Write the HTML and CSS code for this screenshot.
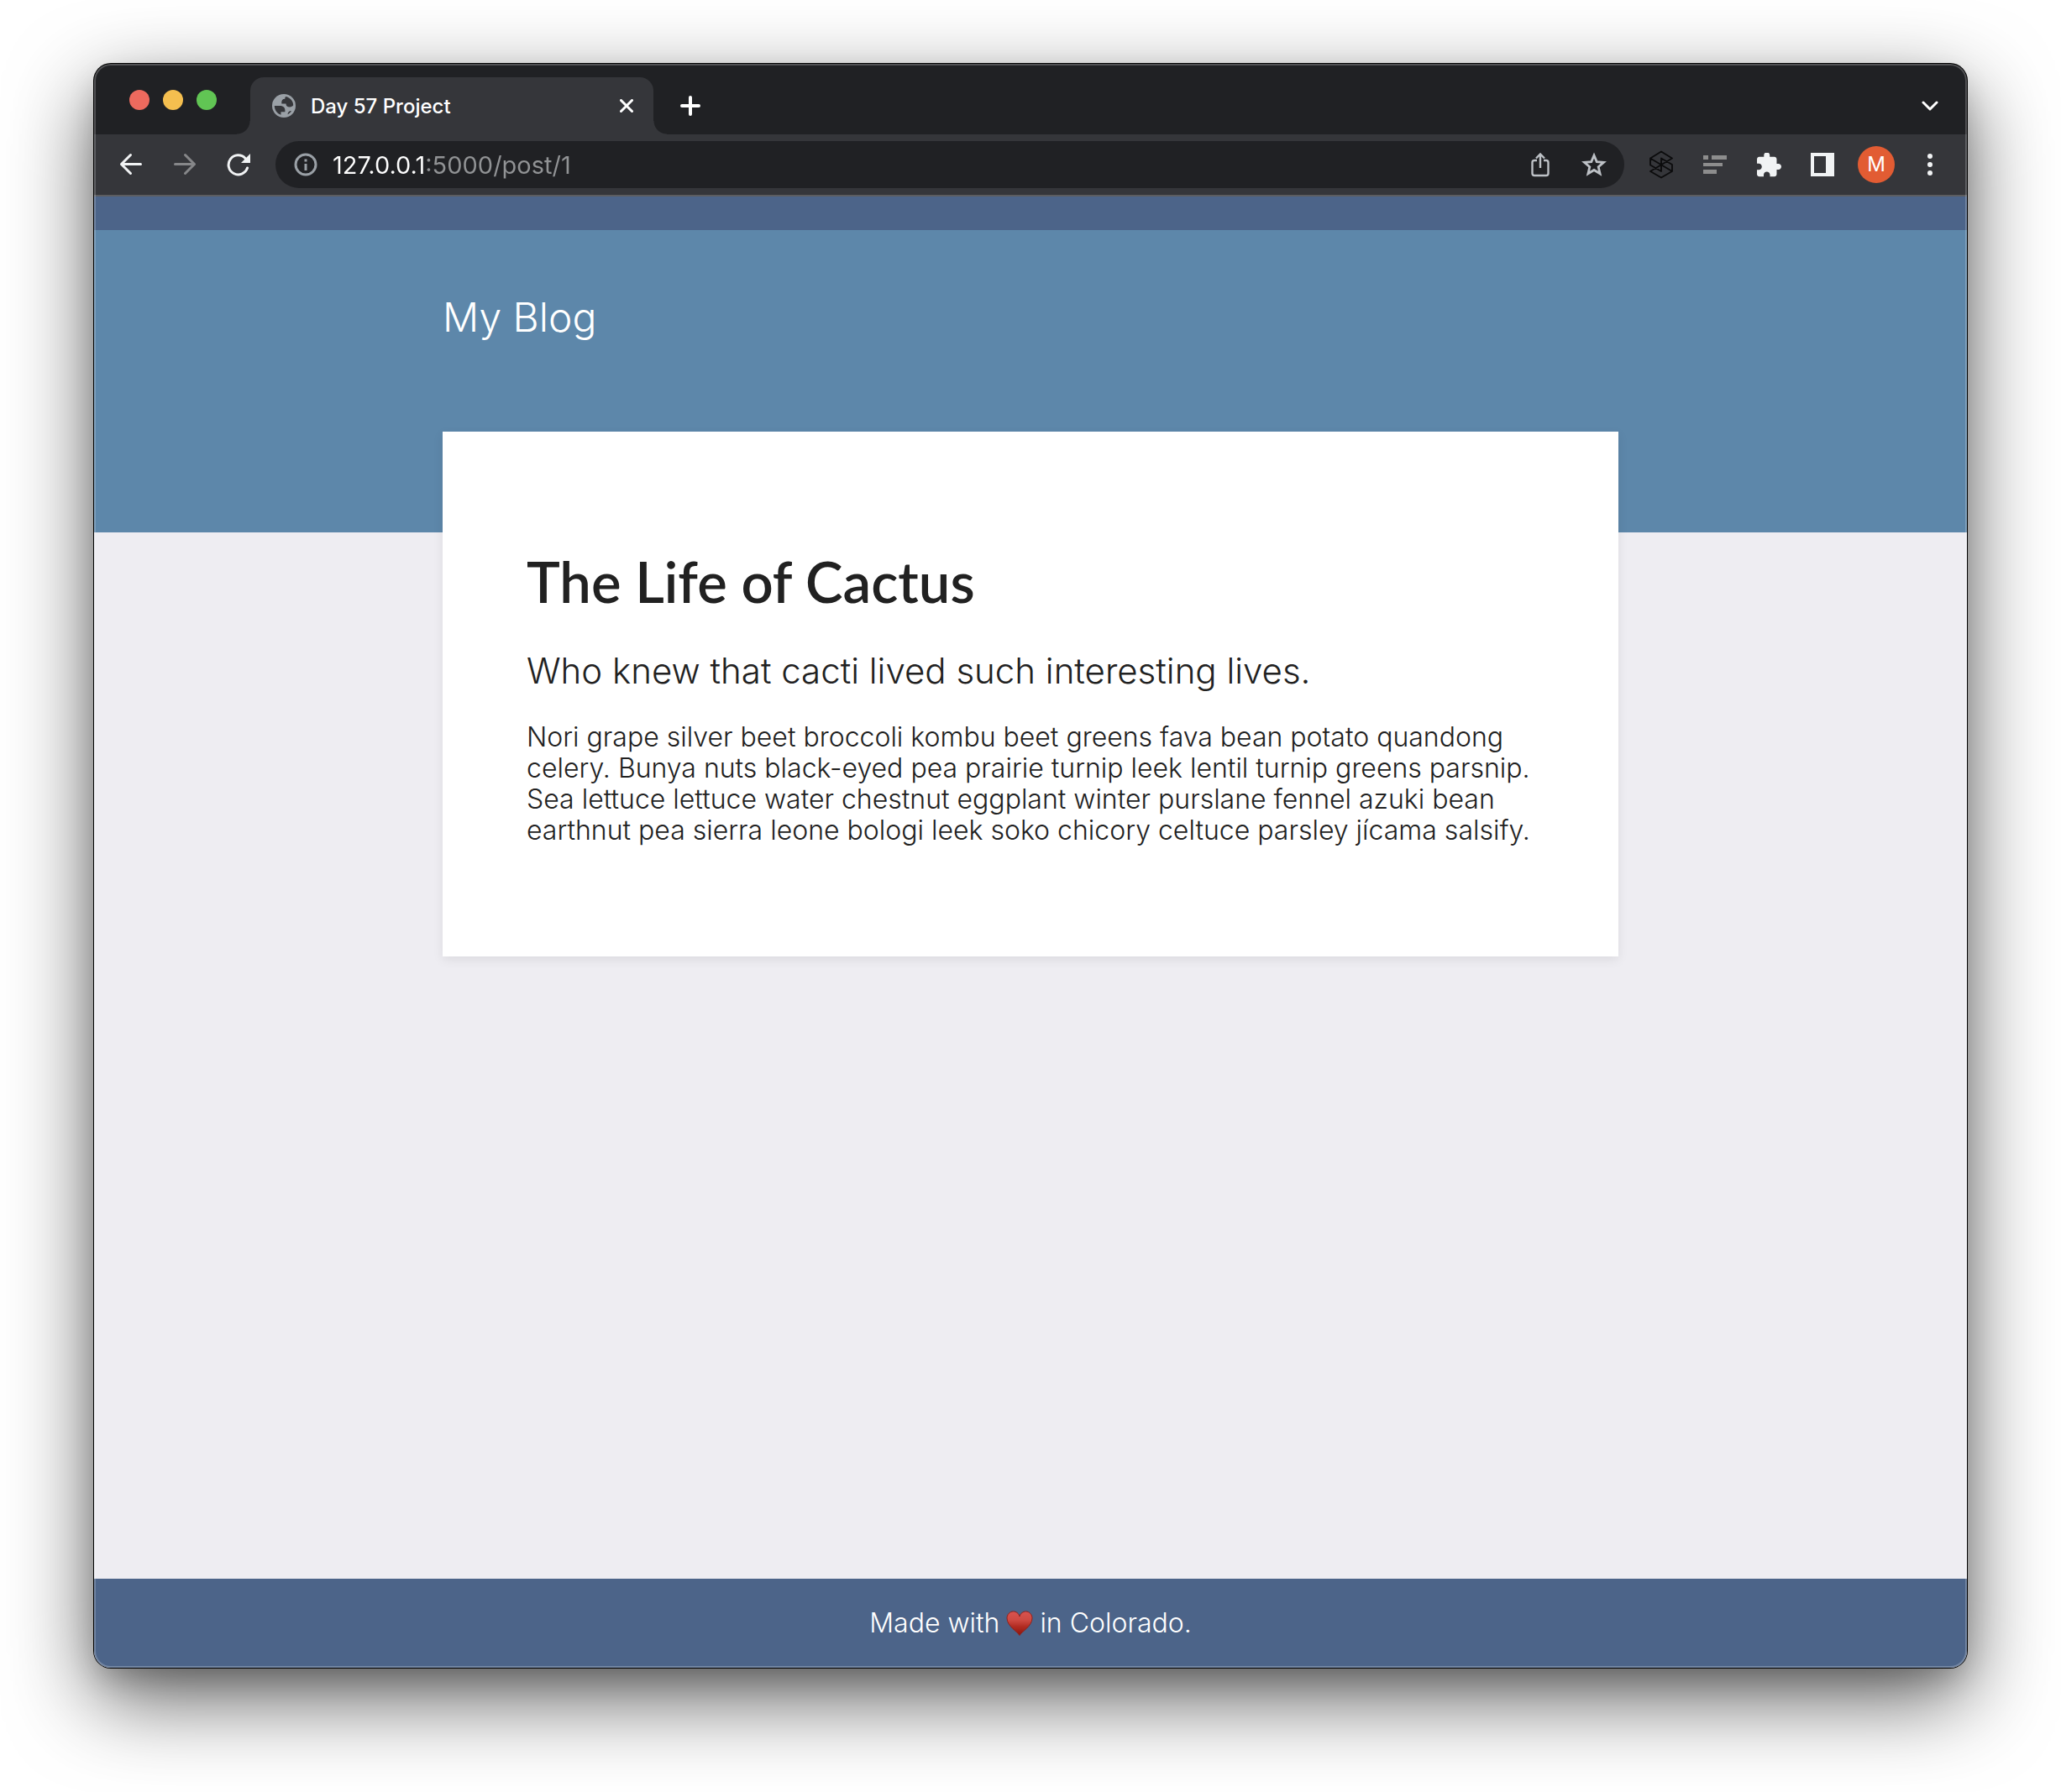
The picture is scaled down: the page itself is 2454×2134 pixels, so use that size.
FILE: index.html
```html
<!DOCTYPE html>
<html lang="en">
<head>
<meta charset="utf-8">
<title>Day 57 Project</title>
<link rel="stylesheet" href="styles.css">
</head>
<body>
<div class="window">
  <div class="tabstrip">
    <div class="lights">
      <button class="light light-close" aria-label="Close window"></button>
      <button class="light light-min" aria-label="Minimize window"></button>
      <button class="light light-max" aria-label="Zoom window"></button>
    </div>
    <div class="tab">
      <svg class="favicon" width="28" height="28" viewBox="0 0 28 28" aria-hidden="true"><circle cx="14" cy="14" r="14" fill="#9aa0a6"/><path fill="#35363a" d="M2.800 14H9c4.800 0 6.900 2.400 6.400 7.200h-4.900v3.500C6 23.300 2.800 19 2.800 14zM16.300 3.100C21.500 4.200 25.200 8.600 25.200 13.300c-.9 1.400-2.300 2.100-4.200 2.100-3 0-4.500-1.300-4.500-3.900h-5.200c-.4-3.800.9-5.700 4-5.700 0-1.300.3-2.200 1-2.700zM18.500 24.300c.3-2.500 1.500-4.300 4.500-4.300-1.200 2-2.600 3.400-4.500 4.300z"/></svg>
      <span class="tab-title">Day 57 Project</span>
      <button class="icon tab-close" aria-label="Close tab"><svg width="16" height="16" viewBox="0 0 16 16" fill="none" stroke="#fff" stroke-width="3" stroke-linecap="round"><path d="M1.500 1.500l13 13M14.500 1.500l-13 13"/></svg></button>
    </div>
    <button class="icon new-tab" aria-label="New tab"><svg width="24" height="24" viewBox="0 0 24 24" fill="none" stroke="#fff" stroke-width="4" stroke-linecap="round"><path d="M12 2v20M2 12h20"/></svg></button>
    <button class="icon tab-search" aria-label="Search tabs"><svg width="20" height="12" viewBox="0 0 20 12" fill="none" stroke="#fff" stroke-width="3" stroke-linecap="round" stroke-linejoin="round"><path d="M2 2l8 8 8-8"/></svg></button>
  </div>

  <div class="toolbar">
    <button class="icon" aria-label="Back"><svg width="28" height="28" viewBox="0 0 28 28" fill="none" stroke="#f1f3f4" stroke-width="3" stroke-linecap="round" stroke-linejoin="round"><path d="M25.500 13.500H2.500M13.500 2.500l-11 11 11 11"/></svg></button>
    <button class="icon" aria-label="Forward"><svg width="28" height="28" viewBox="0 0 28 28" fill="none" stroke="#868789" stroke-width="3" stroke-linecap="round" stroke-linejoin="round"><path d="M2.500 13.500h23M14.500 2.500l11 11-11 11"/></svg></button>
    <button class="icon" aria-label="Reload"><svg width="28" height="28" viewBox="0 0 28 28" fill="none"><path d="M22 6.500A11.500 11.500 0 1 0 24.500 18" stroke="#f1f3f4" stroke-width="3" stroke-linecap="round"/><path d="M28 1v11H17z" fill="#f1f3f4"/></svg></button>
    <div class="omnibox">
      <svg width="28" height="28" viewBox="0 0 28 28" aria-hidden="true"><circle cx="14" cy="14" r="12" fill="none" stroke="#9aa0a6" stroke-width="3"/><path fill="#9aa0a6" d="M12.500 7.500h3v3h-3zM12.500 13h3v8h-3z"/></svg>
      <input class="url" type="text" aria-label="Address" value="127.0.0.1:5000/post/1">
      <button class="icon" aria-label="Share"><svg width="22" height="30" viewBox="0 0 22 30" fill="none" stroke="#bdc1c6" stroke-width="2.400"><path d="M7 10H4Q1.500 10 1.500 12.500v13Q1.500 28 4 28h14q2.500 0 2.500-2.500v-13Q20.500 10 18 10H15M11 19V3M6 7.500L11 2.500l5 5"/></svg></button>
      <button class="icon" aria-label="Bookmark"><svg width="30" height="30" viewBox="0 0 30 30" fill="none" stroke="#bdc1c6" stroke-width="2.800"><path d="M15 4l3.200 7.600 8.300.700-6.300 5.400 1.900 8.100L15 21.500l-7.100 4.300 1.900-8.100-6.300-5.400 8.300-.700z"/></svg></button>
    </div>
    <button class="icon" aria-label="Stack extension"><svg width="28" height="34" viewBox="0 0 28 34" fill="none" stroke="#0b0b0c" stroke-width="1.800" stroke-linejoin="round"><path d="M27 9.500L14 1.500 1 9.500v8l13 7.500V9.500l13 7.500v8l-13 7.500L1 25z M1 9.500L27 25M27 9.500L1 25"/></svg></button>
    <button class="icon" aria-label="Reader extension"><svg width="28" height="22" viewBox="0 0 28 22" fill="#8d8d8d"><path d="M0 0h6v5H0zM10 0h18v5H10zM0 9h23v4H0zM0 17h16v5H0z"/></svg></button>
    <button class="icon" aria-label="Extensions"><svg width="29" height="29" viewBox="2 1.500 21 21" fill="#f1f3f4"><path d="M20.500 11H19V7c0-1.100-.9-2-2-2h-4V3.500C13 2.120 11.880 1 10.500 1S8 2.120 8 3.500V5H4c-1.100 0-1.990.9-1.990 2v3.800H3.500c1.490 0 2.700 1.210 2.700 2.700s-1.210 2.700-2.700 2.700H2V20c0 1.100.9 2 2 2h3.800v-1.500c0-1.490 1.210-2.700 2.700-2.700 1.490 0 2.700 1.210 2.700 2.700V22H17c1.100 0 2-.9 2-2v-4h1.500c1.380 0 2.500-1.120 2.500-2.500S21.880 11 20.500 11z"/></svg></button>
    <button class="icon" aria-label="Side panel"><svg width="28" height="28" viewBox="0 0 28 28"><path fill="#f1f3f4" fill-rule="evenodd" d="M0 0h28v28H0zM4 4v20h14V4z"/></svg></button>
    <button class="icon" aria-label="Profile"><span class="avatar">M</span></button>
    <button class="icon" aria-label="Menu"><svg width="6" height="28" viewBox="0 0 6 28" fill="#f1f3f4"><circle cx="3" cy="4" r="3"/><circle cx="3" cy="14" r="3"/><circle cx="3" cy="24" r="3"/></svg></button>
  </div>

  <div class="page">
    <div class="band"></div>
    <header class="header"><div class="container site-title">My Blog</div></header>
    <main class="container card">
      <h1>The Life of Cactus</h1>
      <h2>Who knew that cacti lived such interesting lives.</h2>
      <p>Nori grape silver beet broccoli kombu beet greens fava bean potato quandong celery. Bunya nuts black-eyed pea prairie turnip leek lentil turnip greens parsnip. Sea lettuce lettuce water chestnut eggplant winter purslane fennel azuki bean earthnut pea sierra leone bologi leek soko chicory celtuce parsley jícama salsify.</p>
    </main>
    <footer class="footer">
      <span>Made with</span>
      <svg width="32" height="30" viewBox="0 0 32 30" role="img" aria-label="love"><defs><linearGradient id="heart" x1="0" y1="0" x2="0" y2="1"><stop offset="0" stop-color="#d9534f"/><stop offset=".35" stop-color="#cf4a42"/><stop offset=".65" stop-color="#b02a20"/><stop offset="1" stop-color="#8c150c"/></linearGradient></defs><path fill="url(#heart)" stroke="#8e211c" d="M16 29.500C13.500 25 1 18.500 1 9 1 4.500 4.500 1 8.500 1 12 1 15 3.300 16 7c1-3.700 4-6 7.500-6C27.500 1 31 4.500 31 9c0 9.500-12.500 16-15 20.500z"/></svg>
      <span>in Colorado.</span>
    </footer>
  </div>
</div>
</body>
</html>
```
FILE: styles.css
```css
* { box-sizing: border-box; }

body {
  margin: 0;
  min-height: 100vh;
  padding: 76px 112px 148px;
  display: flex;
  background: #fff;
  font-family: Inter, "Open Sans", sans-serif;
}

button {
  margin: 0;
  padding: 0;
  border: 0;
  background: none;
  font: inherit;
}

svg { display: block; flex: none; }

/* Browser window */
.window {
  position: relative;
  flex: 1;
  min-width: 0;
  display: flex;
  flex-direction: column;
  overflow: hidden;
  border-radius: 20px;
  background: #202124;
  box-shadow:
    0 0 0 1px #000,
    0 16px 36px -6px rgba(0, 0, 0, .2),
    0 36px 100px rgba(0, 0, 0, .64);
}

.window::after {
  content: "";
  position: absolute;
  inset: 0;
  border: 2px solid rgba(255, 255, 255, .22);
  border-radius: 20px;
  pointer-events: none;
}

.icon {
  width: 64px;
  height: 56px;
  flex: none;
  display: flex;
  align-items: center;
  justify-content: center;
}

/* Tabs */
.tabstrip {
  height: 84px;
  padding: 16px 12px 0 42px;
  display: flex;
}

.tabstrip .icon { height: 68px; }

.lights {
  width: 144px;
  height: 54px;
  display: flex;
  align-items: center;
  gap: 16px;
}

.light {
  width: 24px;
  height: 24px;
  border-radius: 50%;
}

.light-close { background: #ed6a5e; }
.light-min { background: #f5bf4f; }
.light-max { background: #61c554; }

.tab {
  position: relative;
  width: 480px;
  padding-left: 26px;
  display: flex;
  align-items: center;
  gap: 18px;
  border-radius: 16px 16px 0 0;
  background: #35363a;
}

.tab::before,
.tab::after {
  content: "";
  position: absolute;
  bottom: 0;
  width: 16px;
  height: 16px;
}

.tab::before {
  right: 100%;
  background: radial-gradient(circle at 0 0, #202124 15px, #35363a 16px);
}

.tab::after {
  left: 100%;
  background: radial-gradient(circle at 100% 0, #202124 15px, #35363a 16px);
}

.tab-title {
  flex: 1;
  color: #fff;
  font-size: 24px;
  font-weight: 500;
}

.new-tab { margin-left: 12px; }
.tab-search { margin-left: auto; }

/* Toolbar */
.toolbar {
  height: 74px;
  padding: 0 12px;
  display: flex;
  align-items: center;
  background: #35363a;
  border-bottom: 2px solid #5c5d60;
}

.omnibox {
  flex: 1;
  min-width: 0;
  height: 56px;
  margin: 0 12px;
  padding: 0 4px 0 22px;
  display: flex;
  align-items: center;
  border-radius: 28px;
  background: #202124;
}

.url {
  flex: 1;
  min-width: 0;
  height: 40px;
  margin-left: 18px;
  padding: 0;
  border: 0;
  outline: 0;
  color: transparent;
  background: linear-gradient(90deg, #fff 109px, #919395 109px);
  background-clip: text;
  -webkit-background-clip: text;
  font: 29px Inter, sans-serif;
}

.avatar {
  width: 44px;
  height: 44px;
  border-radius: 50%;
  background: #e25c33;
  color: #fff;
  font-size: 24px;
  line-height: 44px;
  text-align: center;
}

/* Blog page */
.page {
  flex: 1;
  display: flex;
  flex-direction: column;
  background: #eeedf2;
  color: #212121;
  font-size: 32px;
  font-weight: 300;
}

.container {
  width: 100%;
  max-width: 1400px;
  margin: 0 auto;
}

.band {
  height: 40px;
  background: #4c6489;
}

.header {
  height: 360px;
  padding-top: 75px;
  background: #5d87aa;
}

.site-title {
  color: #fff;
  font-size: 48px;
  line-height: 58px;
}

.card {
  margin-top: -120px;
  padding: 100px;
  background: #fff;
  box-shadow: 0 4px 12px rgba(0, 0, 0, .08);
}

.card h1 {
  margin: 38px 0 42px;
  font-family: Lato, sans-serif;
  font-size: 67px;
  font-weight: 600;
  line-height: 80px;
}

.card h2 {
  margin: 0 0 36px;
  font-size: 42px;
  font-weight: 300;
  line-height: 49px;
}

.card p {
  margin: 0 0 32px;
  line-height: 37px;
}

.footer {
  margin-top: auto;
  padding: 34px 0;
  display: flex;
  justify-content: center;
  gap: 8px;
  align-items: center;
  background: #4c6489;
  color: #fff;
  line-height: 38px;
}
```
